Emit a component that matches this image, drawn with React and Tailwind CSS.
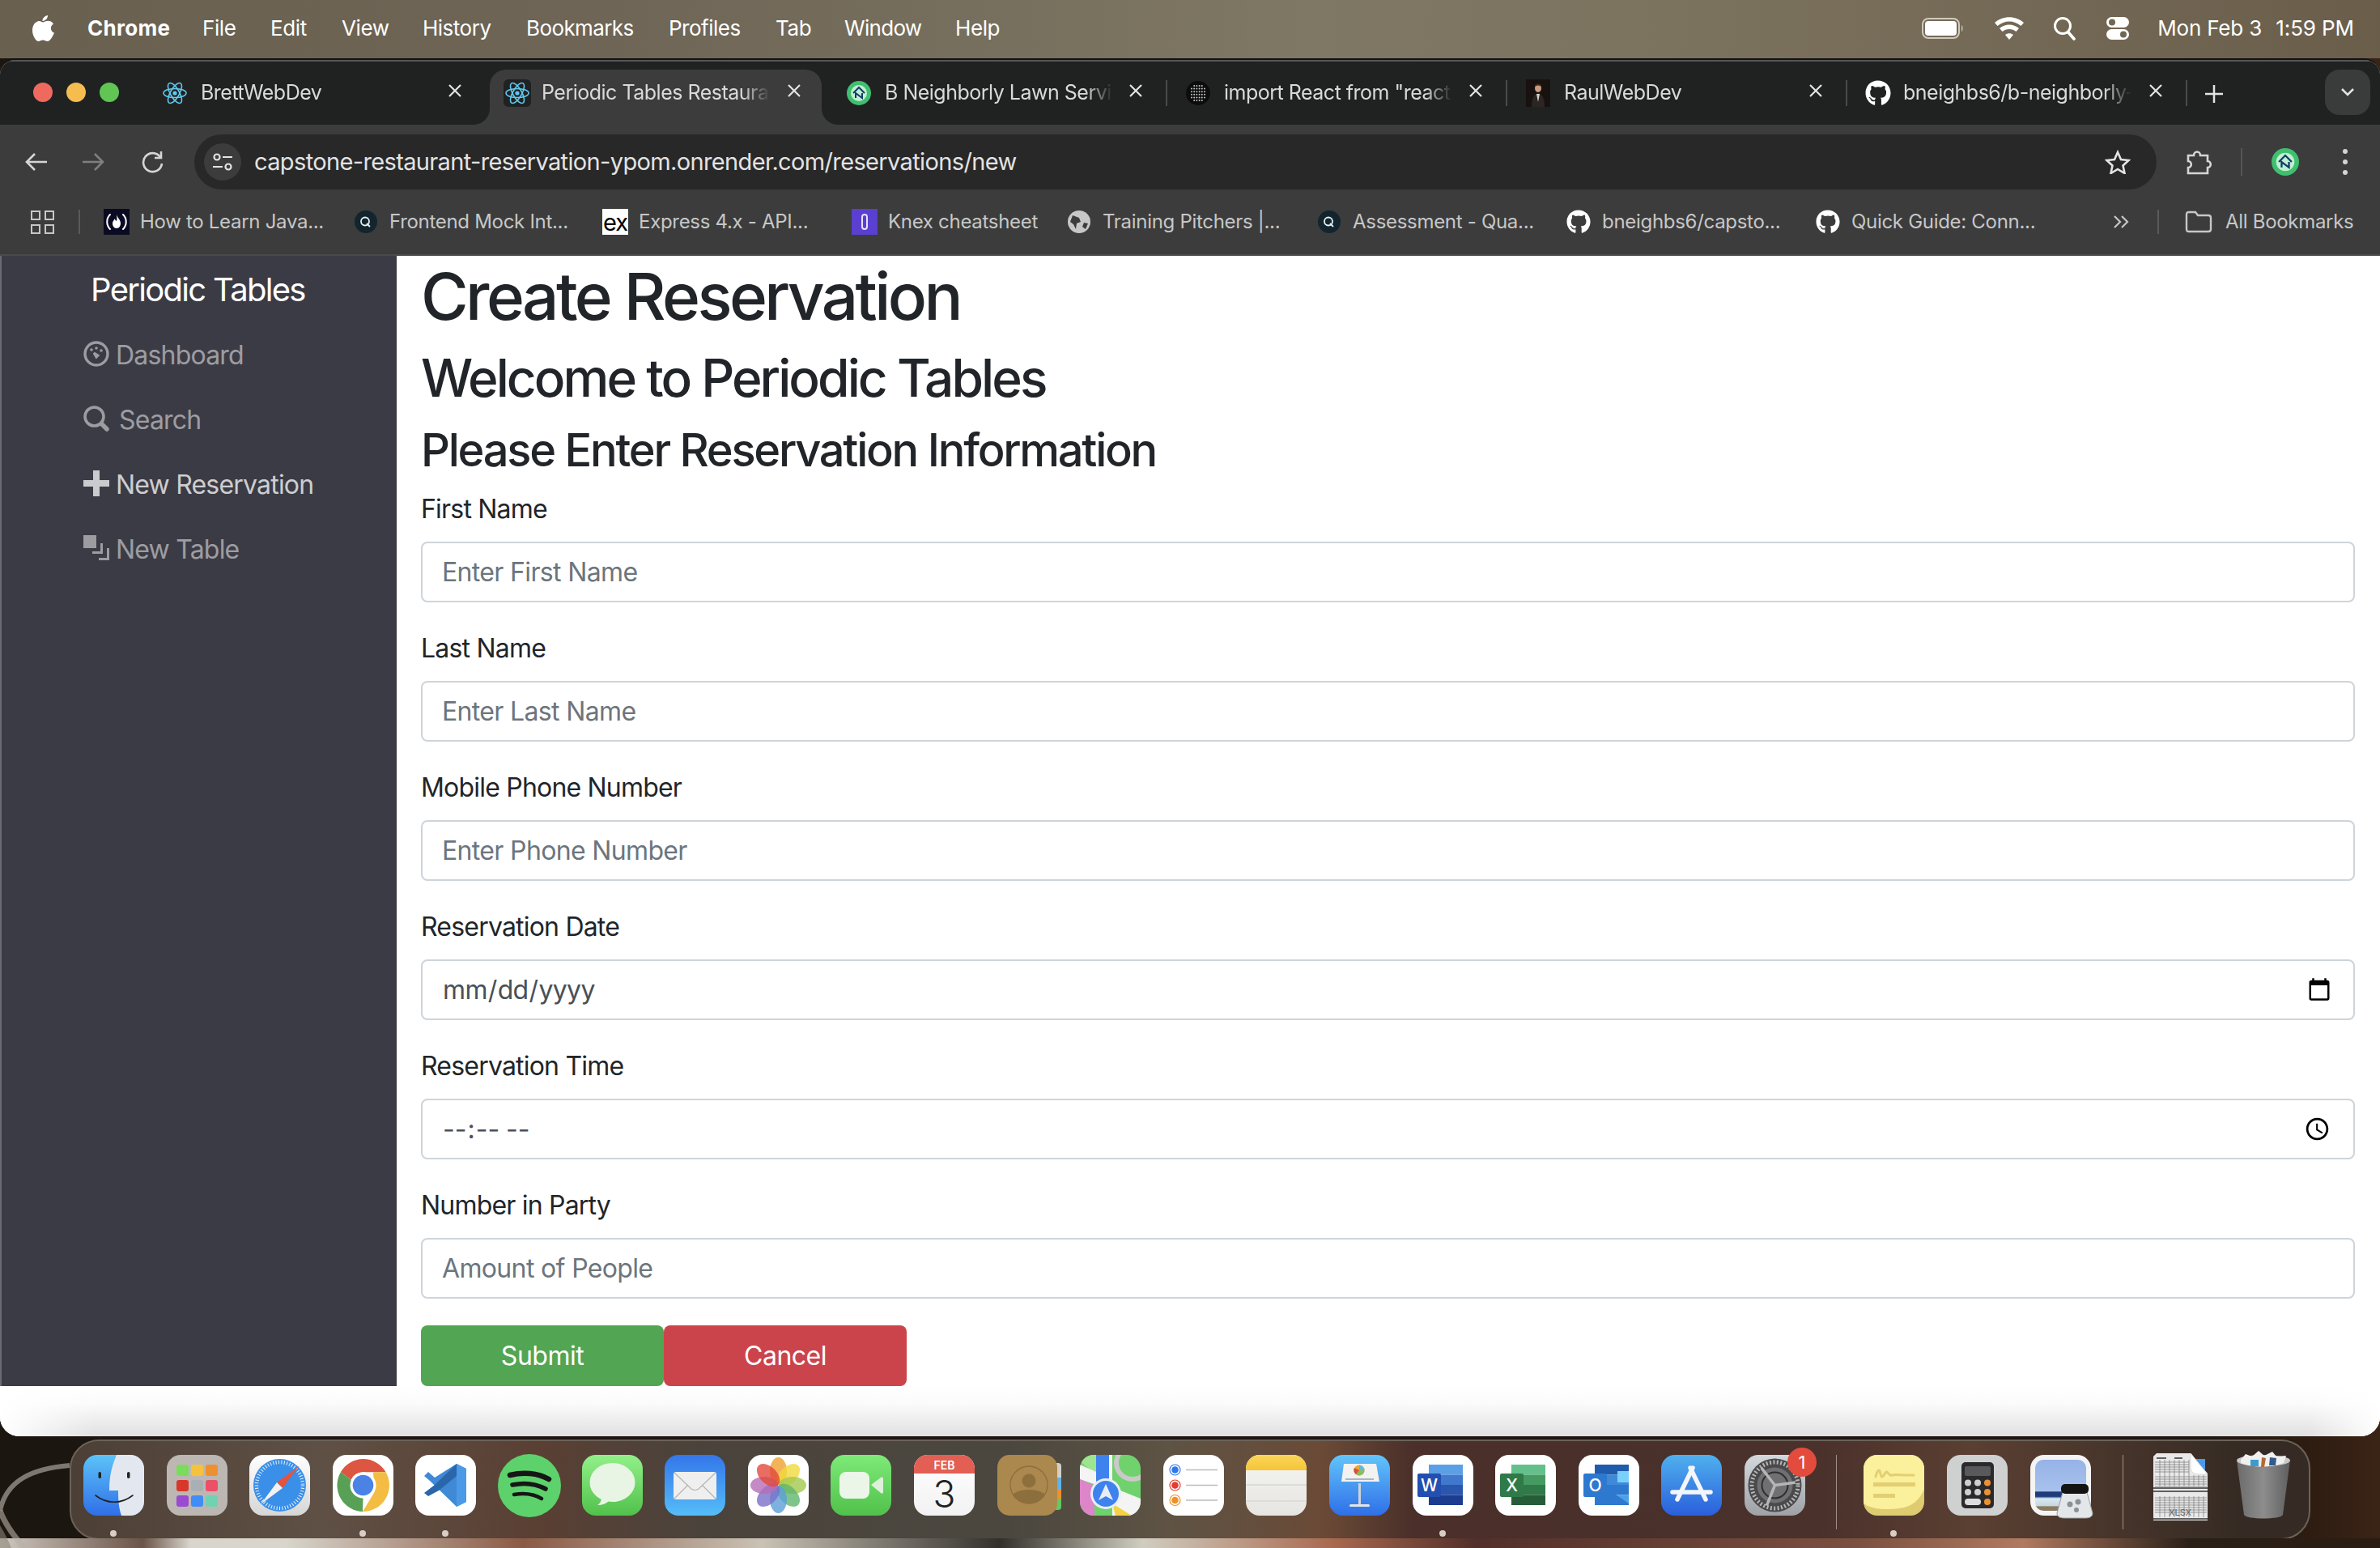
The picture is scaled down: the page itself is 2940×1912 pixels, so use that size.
import { FaGithub } from "react-icons/fa";

const ReactIcon = () => (
  <svg width="30" height="32" viewBox="0 0 30 32" fill="none" stroke="#61c8ee" strokeWidth="1.6">
    <ellipse cx="15" cy="16" rx="14" ry="5.5" />
    <ellipse cx="15" cy="16" rx="14" ry="5.5" transform="rotate(60 15 16)" />
    <ellipse cx="15" cy="16" rx="14" ry="5.5" transform="rotate(120 15 16)" />
    <circle cx="15" cy="16" r="2.6" fill="#61c8ee" stroke="none" />
  </svg>
);

const LawnIcon = ({ size = 30 }) => (
  <svg width={size} height={size} viewBox="0 0 30 30">
    <circle cx="15" cy="15" r="15" fill="#3fbf6f" />
    <circle cx="15" cy="15" r="10" fill="#bff0cf" />
    <path d="M8 15l7-7 7 7M11 21v-6l8 6v-6" fill="none" stroke="#123a6b" strokeWidth="2" />
  </svg>
);

const DotsIcon = () => (
  <svg width="30" height="32" viewBox="0 0 30 32">
    <circle cx="15" cy="16" r="15" fill="#0c0c0c" />
    {[7, 10.2, 13.4, 16.6, 19.8, 23].map((x) =>
      [7, 10.6, 14.2, 17.8, 21.4, 25].map((y) =>
        Math.hypot(x - 15, y - 16) < 11 ? <circle key={`${x}-${y}`} cx={x} cy={y} r="1" fill="#c4c4c4" /> : null
      )
    )}
  </svg>
);

const PortraitIcon = () => (
  <svg width="30" height="34" viewBox="0 0 30 34">
    <rect width="30" height="34" fill="#17110f" />
    <ellipse cx="15" cy="11" rx="4" ry="5" fill="#c99b80" />
    <path d="M7 34c0-12 4-17 8-17s8 5 8 17z" fill="#2b2523" />
    <path d="M13 18h4l-2 10z" fill="#d8d0c8" />
    <path d="M10.500 9c1-5 8-5 9 0-3-2-6-2-9 0z" fill="#3c2a20" />
  </svg>
);

const QuaIcon = () => (
  <svg width="28" height="30" viewBox="0 0 28 30">
    <circle cx="14" cy="15" r="14" fill="#12252e" />
    <circle cx="13" cy="14.5" r="5" fill="none" stroke="#e8f0f2" strokeWidth="1.8" />
    <path d="M15 17l4 4" stroke="#e8f0f2" strokeWidth="1.8" />
  </svg>
);

const FccIcon = () => (
  <svg width="32" height="32" viewBox="0 0 32 32">
    <rect width="32" height="32" fill="#0a0a23" />
    <path d="M8 7c-5 5-5 13 0 18M24 7c5 5 5 13 0 18" fill="none" stroke="#fff" strokeWidth="2" strokeLinecap="round" />
    <path d="M16 7c1 4 5 6 5 11 0 3-2 6-5 6s-5-3-5-6c0-3 2-4 3-6 0 2 1 2 2 3 1-3 0-5 0-8z" fill="#fff" />
  </svg>
);

const tabs = [
  { icon: <ReactIcon />, title: "BrettWebDev", box: "w-[420px] pl-[16px]", close: "right-[34px]" },
  { icon: <ReactIcon />, title: "Periodic Tables Restaurant", active: true, box: "w-[410px] mr-[10px] rounded-t-[20px] bg-[#3c3c3c] pl-[17px]", close: "right-[25px]" },
  { icon: <LawnIcon />, title: "B Neighborly Lawn Service", box: "w-[417px] pl-[21px]", close: "right-[30px]", sep: true },
  { icon: <DotsIcon />, title: 'import React from "react"', box: "w-[420px] pl-[23px]", close: "right-[30px]", sep: true },
  { icon: <PortraitIcon />, title: "RaulWebDev", box: "w-[420px] pl-[23px]", close: "right-[30px]", sep: true },
  { icon: <FaGithub size={32} color="#fff" />, title: "bneighbs6/b-neighborly-lawn", box: "w-[420px] pl-[22px]", close: "right-[30px]", sep: true },
];

const bookmarks = [
  { icon: <FccIcon />, title: "How to Learn Java...", w: "w-[308px]" },
  { icon: <QuaIcon />, title: "Frontend Mock Int...", w: "w-[308px]" },
  {
    icon: (
      <div className="flex h-[32px] w-[32px] items-center justify-center bg-white text-[29px] leading-none tracking-[-1px] text-black">ex</div>
    ),
    title: "Express 4.x - API...",
    w: "w-[308px]",
  },
  {
    icon: (
      <div className="flex h-[32px] w-[32px] items-center justify-center bg-[#5a3fd0]">
        <div className="h-[20px] w-[8px] rounded-full border-2 border-[#e6e0ff]" />
      </div>
    ),
    title: "Knex cheatsheet",
    w: "w-[265px]",
  },
  {
    icon: (
      <svg width="28" height="28" viewBox="0 0 28 28">
        <circle cx="14" cy="14" r="14" fill="#c7c7c7" />
        <path d="M6 6l8 3 2 5-5 2-1 7-3-6-4-3zM20 15l5 1-3 7-4-3z" fill="#3c3c3c" />
      </svg>
    ),
    title: "Training Pitchers |...",
    w: "w-[309px]",
  },
  { icon: <QuaIcon />, title: "Assessment - Qua...", w: "w-[308px]" },
  { icon: <FaGithub size={30} color="#fff" />, title: "bneighbs6/capsto...", w: "w-[308px]" },
  { icon: <FaGithub size={30} color="#fff" />, title: "Quick Guide: Conn...", w: "w-[298px]" },
];

const Tile = ({ children, className = "bg-white", dot }) => (
  <div className="relative h-[75px] w-[75px] shrink-0">
    <div className={`h-full w-full overflow-hidden rounded-[17px] ${className}`}>{children}</div>
    {dot && <div className="absolute bottom-[-26px] left-[33px] h-[8px] w-[8px] rounded-full bg-[#d9cec6]" />}
  </div>
);

const Svg = ({ children, className = "" }) => (
  <svg width="75" height="75" viewBox="0 0 75 75" className={className}>
    {children}
  </svg>
);

const Finder = () => (
  <Tile className="bg-[linear-gradient(180deg,#5cc3f8,#2f6fe8)]" dot>
    <Svg>
      <path d="M41 0H75V75H47C44 66 43 58 43 44H32C32 24 36 12 41 0z" fill="#e3e8f0" />
      <rect x="18.5" y="21" width="3.5" height="8" rx="1.7" fill="#222" />
      <rect x="54" y="21" width="3.5" height="8" rx="1.7" fill="#222" />
      <path d="M15 50c14 11 32 11 46 0" fill="none" stroke="#222" strokeWidth="1.6" strokeLinecap="round" />
    </Svg>
  </Tile>
);

const Launchpad = () => {
  const colors = ["#7bdc5c", "#f5c23d", "#ee9030", "#d8382c", "#a9b0b4", "#ec5068", "#9a4bd0", "#3f8df5", "#6fd2b0"];
  return (
    <Tile className="bg-[#bdb7b3]">
      <div className="grid grid-cols-3 gap-x-[4px] gap-y-[5px] px-[12px] pt-[12px]">
        {colors.map((c, i) => (
          <svg key={i} width="15" height="14">
            <rect width="15" height="14" rx="3" fill={c} />
          </svg>
        ))}
      </div>
    </Tile>
  );
};

const Safari = () => (
  <Tile className="bg-[linear-gradient(180deg,#ffffff,#d6d6d6)]">
    <Svg>
      <circle cx="37.5" cy="37.5" r="32.5" fill="#3a8fe8" />
      <circle cx="37.5" cy="37.5" r="28.5" fill="none" stroke="#e8f2fc" strokeWidth="4.5" strokeDasharray="1 2.4" />
      <polygon points="61,14 34,34 41,41" fill="#e5533d" />
      <polygon points="14,61 34,34 41,41" fill="#f2f2f2" />
    </Svg>
  </Tile>
);

const Chrome = () => (
  <Tile dot>
    <Svg>
      <path d="M37.5 5A32.5 32.5 0 0 1 65.6 21.3H37.5A16 16 0 0 0 22.5 31L10 21A32.5 32.5 0 0 1 37.5 5z" fill="#dc5642" />
      <path d="M10 21L22.5 31L37.5 54L37 70A32.5 32.5 0 0 1 10 21z" fill="#57a055" />
      <path d="M65.6 21.3A32.5 32.5 0 0 1 37 70L51.5 46L50 21.3z" fill="#f2bd42" />
      <circle cx="37.5" cy="37.5" r="16" fill="#fff" />
      <circle cx="37.5" cy="37.5" r="12.8" fill="#4b82e6" />
    </Svg>
  </Tile>
);

const VSCode = () => (
  <Tile dot>
    <Svg>
      <path d="M51 11L63 17V58L51 64L18 32L11 26L16 21L24 28z" fill="#3f89d6" />
      <path d="M51 11V26L29 44L16 51L11 47L24 37z" fill="#2a66aa" />
      <path d="M51 11L63 17V58L51 64z" fill="#4b9ae8" />
    </Svg>
  </Tile>
);

const Spotify = () => (
  <div className="-mt-px h-[78px] w-[78px] shrink-0">
    <svg width="78" height="78" viewBox="0 0 78 78">
      <circle cx="39" cy="39" r="39" fill="#5dd26c" />
      <g fill="none" stroke="#161616" strokeLinecap="round">
        <path d="M15 26c16-4 34-3 48 5" strokeWidth="6.5" />
        <path d="M18 38c14-3 28-2 41 5" strokeWidth="5.5" />
        <path d="M20 50c12-2 24-1 34 5" strokeWidth="4.5" />
      </g>
    </svg>
  </div>
);

const Messages = () => (
  <Tile className="bg-[linear-gradient(180deg,#92f089,#51c14b)]">
    <Svg>
      <ellipse cx="37.5" cy="34" rx="28" ry="24" fill="#e8f5e4" />
      <path d="M24 54c-1 5-3 7-5 8 6 0 11-2 14-5z" fill="#e8f5e4" />
    </Svg>
  </Tile>
);

const Mail = () => (
  <Tile className="bg-[linear-gradient(180deg,#3476ea,#55bdf8)]">
    <Svg>
      <rect x="11" y="21" width="53" height="34" rx="3" fill="#efefef" />
      <path d="M12 22l21 20c3 2 6 2 9 0l21-20M12 54l17-17M63 54l-17-17" fill="none" stroke="#b5b5b5" strokeWidth="1.2" />
    </Svg>
  </Tile>
);

const Photos = () => {
  const petals = ["#f0a030", "#f0d93c", "#a3c94e", "#5fb56c", "#5c9fd8", "#7a6fc8", "#b56db8", "#e2483c"];
  return (
    <Tile>
      <Svg>
        {petals.map((c, i) => (
          <ellipse key={c} cx="37.5" cy="20" rx="10.5" ry="17" fill={c} opacity="0.8" transform={`rotate(${i * 45} 37.5 37.5)`} />
        ))}
      </Svg>
    </Tile>
  );
};

const FaceTime = () => (
  <Tile className="bg-[linear-gradient(180deg,#7eea78,#51c14b)]">
    <Svg>
      <rect x="11" y="21" width="37" height="33" rx="8" fill="#ecf6e8" />
      <path d="M50 37l12-9c1-1 3 0 3 1v17c0 2-2 2-3 1z" fill="#dff0da" />
    </Svg>
  </Tile>
);

const Calendar = () => (
  <Tile className="bg-[linear-gradient(180deg,#ffffff,#f2f2f2)]">
    <div className="flex h-[23px] items-center justify-center bg-[#e35f54] pt-[2px] text-[14px] font-semibold leading-none text-white">FEB</div>
    <div className="text-center text-[46px] font-light leading-[50px] text-[#222]">3</div>
  </Tile>
);

const Contacts = () => (
  <div className="relative h-[75px] w-[79px] shrink-0">
    <div className="absolute right-0 top-[10px] h-[58px] w-[10px] overflow-hidden rounded-r-[4px]">
      <div className="h-[18px] bg-[#d2cfc8]" />
      <div className="h-[14px] bg-[#5fb2ee]" />
      <div className="h-[12px] bg-[#ee9030]" />
      <div className="h-[14px] bg-[#66c860]" />
    </div>
    <div className="absolute left-0 top-0 h-[75px] w-[74px] rounded-[15px] bg-[#ab884e]">
      <svg width="74" height="75" viewBox="0 0 74 75">
        <circle cx="39" cy="37" r="23" fill="none" stroke="#8d6f3d" strokeWidth="1.3" />
        <circle cx="39" cy="32" r="8.5" fill="#8d6f3d" />
        <path d="M19 49c8-8 32-8 40 0-8 15-32 15-40 0z" fill="#8d6f3d" />
      </svg>
    </div>
  </div>
);

const Maps = () => (
  <Tile className="bg-[#6fd26c]">
    <Svg>
      <path d="M0 8l22 18V0H0z" fill="#9fe48f" />
      <path d="M0 30L40 44L75 75H40V30L0 12z" fill="#f4f4f4" />
      <path d="M0 30l18 8v37H0z" fill="#dd85c8" />
      <rect x="20" y="0" width="20" height="40" fill="#f4f4f4" />
      <rect x="20" y="0" width="16" height="36" fill="#3e82ee" />
      <circle cx="65" cy="10" r="20" fill="none" stroke="#c9c9c9" strokeWidth="6" />
      <path d="M40 40L75 54V75H60L38 50z" fill="#f4f4f4" />
      <path d="M40 60l24 15H44z" fill="#f5d145" />
      <circle cx="32" cy="48" r="19" fill="#e8eef5" />
      <circle cx="32" cy="48" r="16" fill="#3e82ee" />
      <path d="M32 36l9 20-9-5-9 5z" fill="#e8eef5" />
    </Svg>
  </Tile>
);

const Reminders = () => (
  <Tile>
    <Svg>
      {[
        [18.5, "#2f78e8"],
        [37.5, "#e33c30"],
        [56, "#ec9228"],
      ].map(([y, c]) => (
        <g key={c}>
          <circle cx="14.5" cy={y} r="6.5" fill="none" stroke={c} strokeWidth="1.2" />
          <circle cx="14.5" cy={y} r="4.3" fill={c} />
          <path d={`M28 ${y}H67`} stroke="#bdbdbd" strokeWidth="1.5" />
        </g>
      ))}
    </Svg>
  </Tile>
);

const Notes = () => (
  <Tile className="bg-[linear-gradient(180deg,#f5f5f3,#e6e5e1)]">
    <div className="h-[19px] bg-[linear-gradient(180deg,#fbd65a,#f6c438)]" />
    <div className="mt-[17px] h-[2px] bg-[#dcdcdc]" />
    <div className="mt-[18px] h-[2px] bg-[#dcdcdc]" />
  </Tile>
);

const Keynote = () => (
  <Tile className="bg-[linear-gradient(180deg,#62c4fb,#2f6fe8)]">
    <Svg>
      <path d="M18 11H58L62 33H15z" fill="#f2f2f0" />
      <rect x="20" y="29" width="35" height="2" fill="#a9b6c4" />
      <circle cx="37" cy="19" r="6.5" fill="#e7a83c" />
      <path d="M37 19V12.5A6.5 6.5 0 0 1 43.5 19z" fill="#5db9e8" />
      <path d="M37 19H43.5A6.5 6.5 0 0 1 33 24z" fill="#86bf5c" />
      <path d="M37 19L33 24A6.5 6.5 0 0 1 31 16z" fill="#d8503c" />
      <rect x="36" y="35" width="3" height="26" fill="#cfd3d8" />
      <rect x="25" y="61" width="25" height="3" rx="1.5" fill="#e2e4e6" />
    </Svg>
  </Tile>
);

const Office = ({ bands, badge, letter, dot, children }) => (
  <Tile dot={dot}>
    <Svg>
      {bands.map((c, i) => (
        <rect key={i} x="20" y={12 + i * 12.5} width="42" height="12.5" fill={c} />
      ))}
      {children}
      <rect x="6" y="23" width="29" height="29" rx="2" fill={badge} />
      <text x="20.5" y="45" textAnchor="middle" fontSize="21" fontWeight="500" fill="#fff" fontFamily="Inter, sans-serif">
        {letter}
      </text>
    </Svg>
  </Tile>
);

const AppStore = () => (
  <Tile className="bg-[linear-gradient(180deg,#4fb0ee,#2a5fdc)]">
    <Svg>
      <g stroke="#f2f6fb" strokeWidth="5.5" strokeLinecap="round" fill="none">
        <path d="M39 16L20 55" />
        <path d="M36 16L55 55" />
        <path d="M14 46H61" />
      </g>
    </Svg>
  </Tile>
);

const Settings = () => (
  <div className="relative h-[75px] w-[75px] shrink-0">
    <div className="h-full w-full overflow-hidden rounded-[17px] bg-[linear-gradient(180deg,#d2d8dc,#9ea2a6)]">
      <Svg>
        <circle cx="37.5" cy="37.5" r="33" fill="#4a4a4c" />
        <circle cx="37.5" cy="37.5" r="28.5" fill="none" stroke="#b5b5b5" strokeWidth="5" strokeDasharray="2 2.4" />
        <circle cx="37.5" cy="37.5" r="22" fill="#707072" />
        <circle cx="37.5" cy="37.5" r="16" fill="none" stroke="#2f2f31" strokeWidth="2" />
        <path d="M37.5 37.5L24 14M37.5 37.5L63 37.5M37.5 37.5L24 61" stroke="#b5b5b7" strokeWidth="3.5" transform="rotate(-8 37.5 37.5)" />
      </Svg>
    </div>
    <div className="absolute right-[-14px] top-[-9px] flex h-[36px] w-[36px] items-center justify-center rounded-full bg-[#e34b3c] text-[22px] text-white">1</div>
  </div>
);

const Stickies = () => (
  <Tile className="bg-[#dfcb70]" dot>
    <Svg>
      <path d="M0 0H75V42C70 55 60 64 45 66C30 68 10 68 0 60z" fill="#fbf09c" />
      <path d="M15 27c2-8 4-9 5-7 1 2 1 7 3 7s4-7 6-6c2 2 3 5 6 4 3-1 8 0 27 0" fill="none" stroke="#e3cf72" strokeWidth="3" strokeLinecap="round" />
      <rect x="12" y="34" width="52" height="5" fill="#e3cf72" />
      <rect x="12" y="48" width="27" height="5" fill="#e3cf72" />
    </Svg>
  </Tile>
);

const Calculator = () => (
  <Tile className="bg-[#cfd0d0]">
    <Svg>
      <rect x="18" y="9" width="40" height="57" rx="5" fill="#2a2a2c" />
      <rect x="22" y="14" width="32" height="12" rx="2" fill="#59595b" />
      {[34.5, 46].map((y) =>
        [26, 38, 50].map((x) => <circle key={`${x}-${y}`} cx={x} cy={y} r="4" fill={x === 50 ? "#ee9030" : "#cfcfcf"} />)
      )}
      <rect x="22" y="54" width="20" height="8" rx="4" fill="#dcdcdc" />
      <circle cx="50" cy="58" r="4" fill="#ee9030" />
    </Svg>
  </Tile>
);

const Preview = () => (
  <div className="relative h-[75px] w-[75px] shrink-0">
    <div className="h-full w-full rounded-[17px] bg-[#f4f4f4] p-[6px]">
      <div className="h-full w-full overflow-hidden rounded-[10px] bg-[linear-gradient(180deg,#96b3e8_0%,#a8c2ec_62%,#1f3a78_63%,#20407c_72%,#d8e8f2_76%,#c9d8de_90%,#8a7a60_92%)]" />
    </div>
    <svg className="absolute right-[-3px] top-[36px]" width="46" height="44" viewBox="0 0 46 44">
      <path d="M8 10H38L45 36C45 41 40 42 36 42H10C6 42 1 41 1 36z" fill="#e4e7ea" stroke="#9aa0a4" />
      <circle cx="17" cy="25" r="3.500" fill="#8a9298" />
      <circle cx="27" cy="22" r="3.500" fill="#8a9298" />
      <circle cx="25" cy="32" r="3" fill="#8a9298" />
      <rect x="6" y="0" width="34" height="12" rx="5" fill="#141414" />
    </svg>
  </div>
);

const Xlsx = () => (
  <div className="relative mt-[-3px] h-[84px] w-[68px] shrink-0">
    <svg width="68" height="84" viewBox="0 0 68 84">
      <path d="M4 1H46L67 26V84H0V5z" fill="#e9e9e9" />
      <path d="M46 8H64V26z" fill="#4b9ae8" />
      <g stroke="#777" strokeWidth="0.7">
        {[8, 14, 20, 26, 32, 38, 44, 50, 56, 62].map((x) => (
          <path key={x} d={`M${x} ${x > 44 ? 28 : 9}V42M${x} 54V80`} />
        ))}
        {[12, 15, 18, 21, 24, 30, 33, 36, 39, 42, 56, 59, 62, 65, 68, 71, 74].map((y) => (
          <path key={y} d={`M2 ${y}H${y < 28 ? 44 : 66}`} />
        ))}
      </g>
      <path d="M46 1V18C46 24 50 27 56 27H67z" fill="#fff" stroke="#d8d8d8" />
      <path d="M4 7H16M26 7H36M0 44H67M0 48H67M0 82H67" stroke="#333" strokeWidth="1.4" />
      <text x="33" y="78" textAnchor="middle" fontSize="11" fill="#666" fontFamily="Inter, sans-serif">XLSX</text>
    </svg>
  </div>
);

const Trash = () => (
  <div className="mt-[-6px] h-[86px] w-[68px] shrink-0">
    <svg width="68" height="86" viewBox="0 0 68 86">
      <defs>
        <linearGradient id="can" x1="0" y1="0" x2="1" y2="0">
          <stop offset="0" stopColor="#6b6b6b" />
          <stop offset="0.5" stopColor="#8d8d8d" />
          <stop offset="1" stopColor="#5e5e5e" />
        </linearGradient>
      </defs>
      <path d="M1 12H67L58 80C56 86 12 86 10 80z" fill="url(#can)" />
      <ellipse cx="34" cy="13" rx="33" ry="7" fill="#c9c9c9" />
      <path d="M6 12l6-7 8 3 8-7 7 6 10-5 5 6 12-1-3 9c-14 6-40 6-53 0z" fill="#f0f0f0" />
      <path d="M18 12h10v8H18z" fill="#3d9bd0" />
      <path d="M32 9l5 1-2 11h-4z" fill="#b36a35" />
      <path d="M42 9l8 1-1 9h-8z" fill="#335a8f" />
    </svg>
  </div>
);

const officeWord = ["#5ba0e6", "#3f78cc", "#2a56ad", "#1c3d8f"];
const officeExcel = ["#63c08a", "#459a62", "#2f7a48", "#275c38"];
const officeOutlook = ["#1f5cae", "#3f8ad8", "#2f78d0", "#4aa3e6"];

const FormField = ({ label, type = "text", placeholder }) => (
  <div className="mb-[33px]">
    <label className="mb-[16px] block h-[48px] text-[32px] leading-[48px] tracking-[-0.8px] text-[#212529]">{label}</label>
    <input
      type={type}
      placeholder={placeholder}
      readOnly={type === "text"}
      className="block h-[75px] w-full rounded-[8px] border-2 border-[#ced4da] bg-white px-[24px] text-[32px] tracking-[-0.65px] text-[#495057] outline-none placeholder:text-[#6c757d]"
    />
  </div>
);

const navItems = [
  {
    label: "Dashboard",
    color: "text-white/50",
    gap: "ml-[8px]",
    icon: (
      <svg width="32" height="32" viewBox="0 0 32 32">
        <circle cx="16" cy="16" r="14" fill="none" stroke="#9c9ca1" strokeWidth="3.4" />
        <circle cx="10" cy="11" r="1.8" fill="#9c9ca1" />
        <circle cx="22" cy="12" r="1.8" fill="#9c9ca1" />
        <circle cx="16" cy="9" r="1.8" fill="#9c9ca1" />
        <path d="M13 15l3 5 2-2z" fill="#9c9ca1" stroke="#9c9ca1" strokeWidth="3" />
      </svg>
    ),
  },
  {
    label: "Search",
    color: "text-white/50",
    gap: "ml-[12px]",
    icon: (
      <svg width="32" height="32" viewBox="0 0 32 32" fill="none" stroke="#9c9ca1" strokeLinecap="round">
        <circle cx="13.5" cy="13.5" r="11.5" strokeWidth="3.6" />
        <path d="M23 23l6 6" strokeWidth="5.5" />
      </svg>
    ),
  },
  {
    label: "New Reservation",
    color: "text-white/75",
    gap: "ml-[8px]",
    icon: (
      <svg width="32" height="32" viewBox="0 0 32 32" fill="#cbcbcf">
        <path d="M12 0h8v12h12v8H20v12h-8V20H0v-8h12z" />
      </svg>
    ),
  },
  {
    label: "New Table",
    color: "text-white/50",
    gap: "ml-[8px]",
    icon: (
      <svg width="32" height="32" viewBox="0 0 32 32" fill="#9c9ca1">
        <rect x="0" y="0" width="16" height="16" />
        <path d="M8 18h10V8h3v13H8zM16 29V26h10V14h3v15z" transform="translate(3 2)" />
      </svg>
    ),
  },
];

export default function App() {
  return (
    <div className="relative flex h-[1912px] w-[2940px] flex-col overflow-hidden bg-[linear-gradient(90deg,#1c1610,#1c1610_92%,#2a1a10_96%,#3a2416)] font-[Inter,sans-serif]">
      {/* menu bar */}
      <div className="flex h-[72px] shrink-0 items-center bg-[linear-gradient(90deg,#69604f,#6e6556_25%,#7f7864_55%,#7c735f_70%,#6a5e4b)] pb-[3px] text-[26px] text-white">
        <svg className="ml-[40px] mr-[41px]" width="27" height="32" viewBox="0 0 27 32" fill="#fff">
          <path d="M19 0c.3 3-2.600 7-6.500 7C12 3.500 15.500.5 19 0zM13 8.500c1.500 0 3.500-1.700 6.500-1.700 2 0 5 1 6.500 3.600-4.500 2.700-4 9.300 1 11-1.500 4-5 10.600-8.500 10.600-2 0-3-1.500-5.500-1.500S9.500 32 7.500 32C4 32 0 24.500 0 18.500 0 12 4 7 8.500 7c2 0 3.500 1.500 4.500 1.500z" />
        </svg>
        <span className="w-[142px] font-bold tracking-[0.3px]">Chrome</span>
        <span className="w-[84px] tracking-[-0.4px]">File</span>
        <span className="w-[88px] tracking-[-0.4px]">Edit</span>
        <span className="w-[100px] tracking-[-0.4px]">View</span>
        <span className="w-[128px] tracking-[-0.5px]">History</span>
        <span className="w-[176px] tracking-[-0.6px]">Bookmarks</span>
        <span className="w-[132px] tracking-[-0.5px]">Profiles</span>
        <span className="w-[85px] tracking-[-0.4px]">Tab</span>
        <span className="w-[137px] tracking-[-0.7px]">Window</span>
        <span className="tracking-[-0.4px]">Help</span>
        <div className="ml-auto flex items-center">
          <svg width="52" height="26" viewBox="0 0 52 26">
            <rect x="1" y="1" width="45" height="24" rx="7" fill="none" stroke="#cfcabd" strokeWidth="2" />
            <rect x="4" y="4" width="39" height="18" rx="4" fill="#fff" />
            <path d="M49 9c2 1 2 7 0 8z" fill="#cfcabd" />
          </svg>
          <svg className="ml-[38px]" width="36" height="28" viewBox="0 0 36 28" fill="#fff">
            <path d="M18 28l-5-6c3-2.500 7-2.500 10 0zM9.500 18l-3.500-4c7-6 17-6 24 0l-3.500 4c-5-4-12-4-17 0zM3.500 11L0 7c10-9 26-9 36 0l-3.500 4C24 3.500 12 3.500 3.500 11z" />
          </svg>
          <svg className="ml-[36px]" width="28" height="30" viewBox="0 0 28 30" fill="none" stroke="#fff">
            <circle cx="12" cy="12" r="9.500" strokeWidth="3" />
            <path d="M19 20l7 8" strokeWidth="3.600" strokeLinecap="round" />
          </svg>
          <svg className="ml-[38px]" width="28" height="28" viewBox="0 0 28 28">
            <rect x="0" y="0" width="28" height="13" rx="6.500" fill="#fff" />
            <circle cx="7" cy="6.500" r="4" fill="#6f6654" />
            <rect x="0" y="15" width="28" height="13" rx="6.500" fill="#fff" />
            <circle cx="21" cy="21.500" r="4" fill="#6f6654" />
          </svg>
          <span className="ml-[35px] w-[146px] tracking-[-0.2px]">Mon Feb 3</span>
          <span className="mr-[32px] tracking-[-0.1px]">1:59 PM</span>
        </div>
      </div>

      {/* browser window */}
      <div className="flex h-[1702px] shrink-0 flex-col overflow-hidden rounded-b-[24px] rounded-t-[20px] border-t-2 border-[#111] bg-white">
        {/* tab strip */}
        <div className="flex h-[80px] shrink-0 items-end border-t-2 border-[#565656] bg-[#202222]">
          <div className="mb-[28px] ml-[41px] flex gap-[17px]">
            <div className="h-[24px] w-[24px] rounded-full bg-[#ee6a5f]" />
            <div className="h-[24px] w-[24px] rounded-full bg-[#f5bd4f]" />
            <div className="h-[24px] w-[24px] rounded-full bg-[#61c554]" />
          </div>
          <div className="ml-[38px] flex h-[68px] items-stretch">
            {tabs.map((tab) => (
              <div key={tab.title} className={`relative flex shrink-0 items-center pb-[10px] ${tab.box}`}>
                <div className="flex w-[47px] shrink-0 items-center">
                  {tab.active ? <div className="flex h-[34px] w-[34px] items-center justify-center rounded-[6px] bg-[#202222]">{tab.icon}</div> : tab.icon}
                </div>
                <div className="w-[282px] overflow-hidden whitespace-nowrap text-[25px] tracking-[-0.5px] text-[#d9d9d9] [mask-image:linear-gradient(90deg,#000_88%,transparent)]">
                  {tab.title}
                </div>
                <svg className={`absolute top-[17px] ${tab.close}`} width="18" height="18" viewBox="0 0 18 18" stroke="#e3e3e3" strokeWidth="2.2">
                  <path d="M2 2l14 14M16 2L2 16" />
                </svg>
                {tab.sep && <div className="absolute right-0 top-[13px] h-[32px] w-[2px] bg-[#4a4a4a]" />}
                {tab.active && (
                  <>
                    <svg className="absolute bottom-0 left-[-20px]" width="20" height="20" viewBox="0 0 20 20" fill="#3c3c3c">
                      <path d="M20 0v20H0c11 0 20-9 20-20z" />
                    </svg>
                    <svg className="absolute bottom-0 right-[-20px]" width="20" height="20" viewBox="0 0 20 20" fill="#3c3c3c">
                      <path d="M0 0v20h20C9 20 0 11 0 0z" />
                    </svg>
                  </>
                )}
              </div>
            ))}
          </div>
          <svg className="mb-[26px] ml-[22px]" width="22" height="24" viewBox="0 0 22 24" stroke="#e3e3e3" strokeWidth="2.500">
            <path d="M11 1v22M0 12h22" />
          </svg>
          <div className="mb-[12px] ml-auto mr-[12px] flex h-[56px] w-[56px] items-center justify-center rounded-[18px] bg-[#3a3b3b]">
            <svg width="18" height="12" viewBox="0 0 18 12" fill="none" stroke="#e3e3e3" strokeWidth="2.500">
              <path d="M2 2l7 7 7-7" />
            </svg>
          </div>
        </div>

        {/* toolbar */}
        <div className="flex h-[80px] shrink-0 items-center bg-[#3c3c3c] pt-[12px]">
          <svg className="ml-[30px]" width="28" height="24" viewBox="0 0 28 24" fill="none" stroke="#d5d5d5" strokeWidth="2.600">
            <path d="M28 12H3M13 2L3 12l10 10" />
          </svg>
          <svg className="ml-[44px]" width="28" height="24" viewBox="0 0 28 24" fill="none" stroke="#7f7f7f" strokeWidth="2.600">
            <path d="M0 12h25M15 2l10 10-10 10" />
          </svg>
          <svg className="ml-[44px]" width="28" height="28" viewBox="0 0 28 28" fill="none" stroke="#d5d5d5" strokeWidth="2.600">
            <path d="M24 8a11.500 11.500 0 1 0 2 8" />
            <path d="M25 1v8h-8" />
          </svg>
          <div className="ml-[38px] flex h-[68px] w-[2424px] items-center rounded-full bg-[#282828]">
            <div className="ml-[12px] flex h-[46px] w-[46px] items-center justify-center rounded-full bg-[#3c3c3c]">
              <svg width="26" height="24" viewBox="0 0 26 24" fill="none" stroke="#e3e3e3" strokeWidth="2.200">
                <circle cx="6" cy="6" r="3.500" />
                <path d="M13 6h12M1 18h12" />
                <circle cx="20" cy="18" r="3.500" />
              </svg>
            </div>
            <div className="ml-[16px] text-[29px] tracking-[-0.64px] text-[#e3e3e3]">capstone-restaurant-reservation-ypom.onrender.com/reservations/new</div>
            <svg className="ml-auto mr-[32px]" width="32" height="30" viewBox="0 0 32 30" fill="none" stroke="#e3e3e3" strokeWidth="2.600">
              <path d="M16 3l4 9 9.500 1-7 6.500 2 9.500-8.500-5-8.500 5 2-9.500-7-6.500L12 12z" />
            </svg>
          </div>
          <svg className="ml-[36px]" width="32" height="32" viewBox="0 0 32 32" fill="none" stroke="#d5d5d5" strokeWidth="2.600">
            <path d="M3 8h7c0-6 8-6 8 0h9v7c5 0 5 8 0 8v7H3v-7c5 0 5-8 0-8z" />
          </svg>
          <div className="ml-[36px] h-[34px] w-[2px] bg-[#555]" />
          <div className="ml-[36px]">
            <LawnIcon size={34} />
          </div>
          <div className="ml-[54px] flex flex-col gap-[7px]">
            <div className="h-[6px] w-[6px] rounded-full bg-[#d5d5d5]" />
            <div className="h-[6px] w-[6px] rounded-full bg-[#d5d5d5]" />
            <div className="h-[6px] w-[6px] rounded-full bg-[#d5d5d5]" />
          </div>
        </div>

        {/* bookmarks bar */}
        <div className="flex h-[82px] shrink-0 items-center border-b-2 border-[#4b4b4b] bg-[#3c3c3c] text-[24px] tracking-[-0.3px] text-[#c7c7c7]">
          <div className="ml-[38px] grid grid-cols-2 gap-[5px]">
            {[0, 1, 2, 3].map((n) => (
              <div key={n} className="h-[12px] w-[12px] border-2 border-[#c7c7c7]" />
            ))}
          </div>
          <div className="ml-[30px] h-[30px] w-[2px] bg-[#5a5a5a]" />
          <div className="ml-[29px] flex">
            {bookmarks.map((b) => (
              <div key={b.title} className={`flex items-center gap-[13px] ${b.w}`}>
                <div className="flex w-[32px] justify-center">{b.icon}</div>
                <span className="whitespace-nowrap">{b.title}</span>
              </div>
            ))}
          </div>
          <svg className="ml-[70px]" width="20" height="18" viewBox="0 0 20 18" fill="none" stroke="#c7c7c7" strokeWidth="2.200">
            <path d="M2 2l7 7-7 7M11 2l7 7-7 7" />
          </svg>
          <div className="ml-[35px] h-[30px] w-[2px] bg-[#5a5a5a]" />
          <svg className="ml-[32px]" width="34" height="28" viewBox="0 0 34 28" fill="none" stroke="#c7c7c7" strokeWidth="2.400">
            <path d="M2 5c0-2 1-3 3-3h8l3 4h13c2 0 3 1 3 3v14c0 2-1 3-3 3H5c-2 0-3-1-3-3z" />
          </svg>
          <span className="ml-[16px] whitespace-nowrap">All Bookmarks</span>
        </div>

        {/* page */}
        <div className="flex h-[1396px] shrink-0">
          <nav className="h-full w-[490px] shrink-0 border-l-2 border-[#6a6a72] bg-[#3b3b45]">
            <div className="pl-[110px] pt-[18px] text-[40px] leading-[48px] tracking-[-1.7px] text-white">Periodic Tables</div>
            <div className="pt-[17px]">
              {navItems.map((item) => (
                <div key={item.label} className={`flex h-[80px] items-center pl-[101px] text-[32px] tracking-[-0.8px] ${item.color}`}>
                  <div className="-mt-[4px]">{item.icon}</div>
                  <span className={item.gap}>{item.label}</span>
                </div>
              ))}
            </div>
          </nav>
          <main className="min-w-0 flex-1 pl-[30px] pr-[31px] pt-[2px]">
            <h1 className="h-[96px] text-[80px] font-medium leading-[96px] tracking-[-3.6px] text-[#212529]">Create Reservation</h1>
            <h2 className="mt-[14px] h-[77px] text-[64px] font-medium leading-[77px] tracking-[-2.95px] text-[#212529]">Welcome to Periodic Tables</h2>
            <h3 className="mt-[18px] h-[67px] text-[56px] font-medium leading-[67px] tracking-[-2.25px] text-[#212529]">Please Enter Reservation Information</h3>
            <form className="mt-[15px]">
              <FormField label="First Name" placeholder="Enter First Name" />
              <FormField label="Last Name" placeholder="Enter Last Name" />
              <FormField label="Mobile Phone Number" placeholder="Enter Phone Number" />
              <FormField label="Reservation Date" type="date" />
              <FormField label="Reservation Time" type="time" />
              <FormField label="Number in Party" placeholder="Amount of People" />
              <div className="flex">
                <button type="button" className="h-[75px] w-[300px] rounded-[8px] bg-[#52a552] text-[32px] tracking-[-0.5px] text-white">Submit</button>
                <button type="button" className="h-[75px] w-[300px] rounded-[8px] bg-[#cc444b] text-[32px] tracking-[-0.5px] text-white">Cancel</button>
              </div>
            </form>
          </main>
        </div>
        <div className="flex-1 bg-[linear-gradient(90deg,#ffffff_0%,transparent_4%,transparent_97%,#ffffff_100%),linear-gradient(180deg,#ffffff_0%,#fbfbfb_35%,#e0e0e0_100%)]" />
      </div>

      {/* dock */}
      <div className="mx-[86px] mt-[4px] flex h-[124px] shrink-0 items-start rounded-[36px] border-2 border-[#6b6259] bg-[linear-gradient(90deg,#4c3f35_0%,#5f5045_11%,#5a3f33_21%,#4a433c_28%,#4b473f_42%,#5e5344_49%,#6a4a36_56%,#4a2f2a_60%,#4a312b_78%,#5a3f32_85%,#352b24_97%)] pl-[15px] pt-[17px]">
        <div className="flex items-start gap-[27.6px]">
          <Finder />
          <Launchpad />
          <Safari />
          <Chrome />
          <VSCode />
          <div className="-ml-[1px] -mr-[2px]">
            <Spotify />
          </div>
          <Messages />
          <Mail />
          <Photos />
          <FaceTime />
          <Calendar />
          <div className="-mr-[4px]">
            <Contacts />
          </div>
          <Maps />
          <Reminders />
          <Notes />
          <Keynote />
          <Office bands={officeWord} badge="#234fb0" letter="W" dot />
          <Office bands={officeExcel} badge="#2f7a48" letter="X" />
          <Office bands={officeOutlook} badge="#2f78d0" letter="O">
            <path d="M34 41L62 60V62H20V41z" fill="#2f78d0" />
            <rect x="48" y="20" width="14" height="14" fill="#7ad0fa" />
          </Office>
          <AppStore />
          <Settings />
        </div>
        <div className="ml-[38px] h-[92px] w-[1px] bg-[#a08f84]" />
        <div className="ml-[33px] flex items-start gap-[28px]">
          <Stickies />
          <Calculator />
          <Preview />
        </div>
        <div className="ml-[39px] h-[92px] w-[1px] bg-[#a08f84]" />
        <div className="ml-[37px] flex items-start gap-[34px]">
          <Xlsx />
          <Trash />
        </div>
      </div>

      {/* wallpaper strip under the dock */}
      <div className="mt-[-2px] h-[12px] bg-[linear-gradient(90deg,#cfc9c0_0%,#6a5348_6%,#d8d5cc_8%,#d8d5cc_12%,#8a5a45_22%,#c9c2b5_32%,#33302c_42%,#d0cdc0_48%,#a8694f_56%,#522f2a_62%,#7a5040_78%,#b07a60_85%,#2a2018_92%,#2a1c12_100%)]" />

      {/* glass in the wallpaper, left of the dock */}
      <svg className="absolute left-0 top-[1778px]" width="86" height="134" viewBox="0 0 86 134" fill="none">
        <path d="M86 32C40 36 8 50 0 88" stroke="#a8a29a" strokeWidth="6" opacity="0.7" />
        <path d="M0 88c6 16 16 30 30 46" stroke="#b5b0a8" strokeWidth="7" opacity="0.6" />
        <path d="M0 106c6 10 10 18 14 28H0z" fill="#8a8378" opacity="0.6" />
      </svg>
    </div>
  );
}
